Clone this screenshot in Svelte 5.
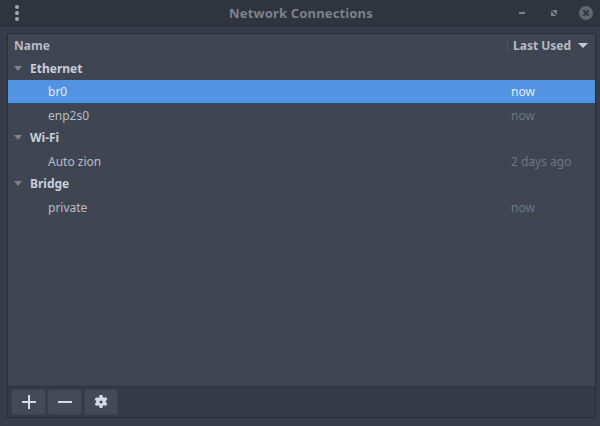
<script>
  const groups = [
    { name: 'Ethernet', rows: [{ n: 'br0', t: 'now', sel: true }, { n: 'enp2s0', t: 'now' }] },
    { name: 'Wi-Fi', rows: [{ n: 'Auto zion', t: '2 days ago' }] },
    { name: 'Bridge', rows: [{ n: 'private', t: 'now' }] }
  ];
</script>

<div class="win">
  <header class="title">
    <div class="menu"><i></i><i></i><i></i></div>
    <div class="name">Network Connections</div>
    <div class="ctl">
      <svg width="14" height="14" viewBox="0 0 14 14"><rect x="1" y="6" width="6" height="2" fill="#7c818c"/></svg>
      <svg width="10" height="14" viewBox="0 0 10 14"><path d="M2 4h5v5z" fill="#7c818c"/><path d="M1 5l5 5H1z" fill="#7c818c"/></svg>
      <svg width="16" height="16" viewBox="0 0 16 16"><circle cx="8" cy="8" r="7" fill="#62666f"/><path d="M5.400 5.400l5.200 5.200M10.600 5.400l-5.200 5.200" stroke="#2f343f" stroke-width="2"/></svg>
    </div>
  </header>
  <div class="panel">
    <div class="list">
      <div class="row head">
        <span class="c1">Name</span>
        <span class="c2"><b>Last Used</b><i class="sort"></i></span>
      </div>
      {#each groups as g}
        <div class="row group"><i class="tri"></i><span>{g.name}</span></div>
        {#each g.rows as r}
          <div class="row item" class:sel={r.sel}>
            <span class="c1 ind">{r.n}</span><span class="c2 time">{r.t}</span>
          </div>
        {/each}
      {/each}
    </div>
    <div class="bar">
      <button aria-label="Add"><svg width="16" height="16" viewBox="0 0 16 16"><path d="M7 1h2v6h6v2H9v6H7V9H1V7h6z" fill="#d3dae3"/></svg></button>
      <button aria-label="Remove"><svg width="16" height="16" viewBox="0 0 16 16"><rect x="1" y="7" width="14" height="2" fill="#d3dae3"/></svg></button>
      <button aria-label="Settings"><svg width="14" height="14" viewBox="0 0 14 14"><path fill="#d3dae3" fill-rule="evenodd" d="M5.600 0h2.800l.4 2 1.200.7 1.900-.7 1.400 2.500-1.500 1.300v1.400l1.500 1.300-1.400 2.500-1.900-.7-1.200.7-.4 2H5.600l-.4-2-1.200-.7-1.900.7L.7 8.800l1.500-1.300V6.100L.7 4.800 2.100 2.300l1.900.7 1.200-.7zM7 5.500a1.500 1.500 0 1 0 0 3 1.500 1.500 0 0 0 0-3z"/></svg></button>
    </div>
  </div>
</div>

<style>
  :global(body) { margin: 0; background: #383c4a; }
  .win {
    width: 600px; height: 426px; display: flex; flex-direction: column;
    background: #383c4a; font: 12px "Noto Sans", sans-serif; color: #d3dae3; overflow: hidden;
  }
  .title {
    height: 27px; flex: none; display: flex; align-items: center; justify-content: space-between;
    background: #2f343f; position: relative; padding: 0 0 0 15px;
  }
  .menu { display: flex; flex-direction: column; gap: 2px; margin-top: -1px; }
  .menu i { width: 4px; height: 4px; border-radius: 50%; background: #a4a8b0; }
  .name {
    position: absolute; left: 2px; right: 0; text-align: center; font-weight: 700; color: #7c818c; top: 4px; font-size: 13px; line-height: 18px; letter-spacing: .15px;
  }
  .ctl { display: flex; align-items: center; gap: 18px; padding-right: 6px; margin-top: -1px; }
  .ctl svg { display: block; }
  .panel {
    margin: 6px 4px 8px 7px; flex: 1; display: flex; flex-direction: column;
    border: 1px solid #2b2e39; background: #404552; min-height: 0; border-radius: 0 0 2px 2px;
  }
  .list { flex: 1; }
  .row { height: 23px; box-sizing: border-box; display: flex; align-items: center; line-height: 21px; white-space: nowrap; }
  .c1 { flex: 1; }
  .c2 { width: 88px; padding-left: 5px; box-sizing: border-box; display: flex; align-items: center; }
  .head { color: #b4bac4; font-weight: 700; padding-left: 6px; }
  .head .c2 { border-left: 1px solid #4f5461; height: 13px; line-height: 13px; }
  .head b { font-weight: 700; }
  .sort { width: 0; height: 0; margin-left: 7px; border: 5px solid transparent; border-top: 5px solid #c4cad4; border-bottom: 0; }
  .group { font-weight: 700; color: #c8ced8; padding-left: 6px; }
  .tri { width: 0; height: 0; margin-right: 8px; border: 4.500px solid transparent; border-top: 5px solid #7c818c; border-bottom: 0; }
  .item { color: #b6bcc6; padding-top: 2px; }
  .ind { padding-left: 40px; }
  .time { color: #6f7685; }
  .item .time { padding-left: 4px; }
  .sel { background: #5294e2; color: #e4ecf6; padding-top: 0; }
  .sel .time { color: #e4ecf6; }
  .bar {
    height: 31px; flex: none; background: #363a47; border-top: 1px solid #2f333e;
    display: flex; align-items: center; padding: 0 3px; gap: 1px; box-sizing: border-box;
  }
  button {
    height: 26px; width: 35px; padding: 0; border: 1px solid #3c404e; border-radius: 3px; background: #444a58;
    display: flex; align-items: center; justify-content: center;
  }
  button:last-child { width: 34px; margin-left: 1px; }
</style>
